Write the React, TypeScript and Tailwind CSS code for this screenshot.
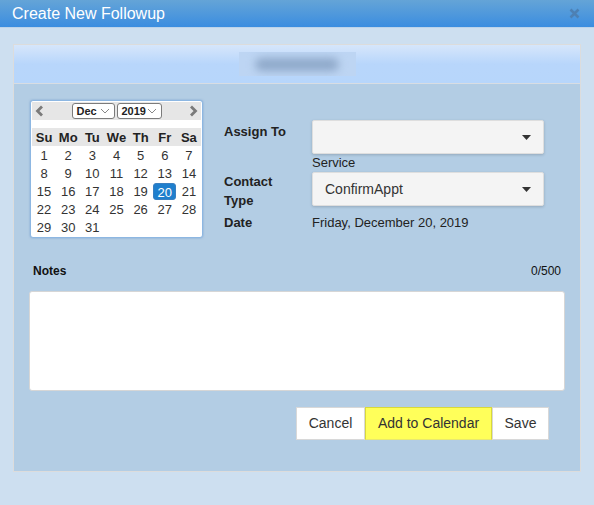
import React from 'react';

const weeks: (number | null)[][] = [
  [1, 2, 3, 4, 5, 6, 7],
  [8, 9, 10, 11, 12, 13, 14],
  [15, 16, 17, 18, 19, 20, 21],
  [22, 23, 24, 25, 26, 27, 28],
  [29, 30, 31, null, null, null, null],
];

const dayNames = ['Su', 'Mo', 'Tu', 'We', 'Th', 'Fr', 'Sa'];

function Chevron({ dir }: { dir: 'left' | 'right' }) {
  return (
    <svg width="9" height="12" viewBox="0 0 9 12">
      <path
        d={dir === 'left' ? 'M7 1.5 L2.5 6 L7 10.5' : 'M2 1.5 L6.5 6 L2 10.5'}
        fill="none"
        stroke="#7a7a7a"
        strokeWidth="2.8"
      />
    </svg>
  );
}

function MiniSelect({ label, width }: { label: string; width: string }) {
  return (
    <div
      className={`${width} h-[16px] flex items-center justify-between px-[4px] bg-white border border-[#7b7b7b] rounded-[3px] text-[11px] font-bold text-[#222]`}
    >
      <span>{label}</span>
      <svg width="10" height="6" viewBox="0 0 10 6">
        <path d="M1 1 L5 5 L9 1" fill="none" stroke="#888" strokeWidth="1" />
      </svg>
    </div>
  );
}

function Calendar() {
  return (
    <div className="w-[173px] h-[138px] bg-white border border-[#8db7e2] rounded-[3px] shadow-[0_0_2px_rgba(60,120,190,0.5)] p-[1px]">
      <div className="h-[18px] bg-[#e6e6e6] flex items-center justify-between px-[3px]">
        <Chevron dir="left" />
        <div className="flex gap-[2px]">
          <MiniSelect label="Dec" width="w-[43px]" />
          <MiniSelect label="2019" width="w-[45px]" />
        </div>
        <Chevron dir="right" />
      </div>
      <div className="mt-[8px] h-[18px] bg-[#e6e6e6] grid grid-cols-7 items-center text-[13px] font-bold text-[#222]">
        {dayNames.map((d) => (
          <div key={d} className="text-center">
            {d}
          </div>
        ))}
      </div>
      {weeks.map((w, i) => (
        <div key={i} className="h-[18px] grid grid-cols-7 items-center text-[13px] text-[#333]">
          {w.map((d, j) =>
            d === 20 ? (
              <div key={j} className="flex justify-center">
                <span className="w-[23px] h-[17px] leading-[17px] text-center rounded-[3px] bg-[#1f7fcd] border border-[#3a7fc0] text-white">
                  {d}
                </span>
              </div>
            ) : (
              <div key={j} className="text-center">
                {d ?? ''}
              </div>
            )
          )}
        </div>
      ))}
    </div>
  );
}

function Select({ value }: { value?: string }) {
  return (
    <div className="w-[232px] h-[34px] bg-[#f4f4f4] border border-[#dedede] rounded-[2px] shadow-[0_1px_3px_rgba(0,0,0,0.18)] flex items-center justify-between pl-[12px] pr-[12px] text-[14px] text-[#333]">
      <span>{value ?? ''}</span>
      <svg width="9" height="5" viewBox="0 0 9 5">
        <path d="M0 0 L9 0 L4.5 5 Z" fill="#333" />
      </svg>
    </div>
  );
}

export default function App() {
  return (
    <div className="w-[594px] h-[505px] bg-[#cddff0] font-['Liberation_Sans',Arial,sans-serif] overflow-hidden">
      <div className="h-[28px] bg-gradient-to-b from-[#64a4d7] to-[#3a8de0] border-b border-[#bcd3ea] flex items-center justify-between pl-[12px] pr-[14px]">
        <span className="text-white text-[16px]">Create New Followup</span>
        <svg width="11" height="11" viewBox="0 0 11 11">
          <path d="M1.5 1.5 L9.5 9.5 M9.5 1.5 L1.5 9.5" stroke="#4d80b3" strokeWidth="2.6" />
        </svg>
      </div>

      <div className="mx-[13px] mt-[16px] border border-[#dcdcdc] bg-[#b3cde4]">
        <div className="h-[39px] bg-gradient-to-b from-[#d6e6fb] via-[#b8d6fb] to-[#b7d6fb] border-b border-[#d8dde3] flex items-center justify-center">
          <div className="w-[117px] h-[24px] bg-[#bdd5f3] flex items-center justify-center overflow-hidden">
            <div className="w-[84px] h-[13px] rounded-full bg-[#8ea8c9] blur-[4px]" />
          </div>
        </div>

        <div className="px-[15px] pt-[16px] pb-[31px]">
          <div className="flex">
            <div className="ml-px">
              <Calendar />
            </div>
            <div className="ml-[21px] mt-[20px] flex flex-col text-[13px] text-[#222]">
              <div className="flex">
                <div className="w-[88px] pt-[2px] font-bold">Assign To</div>
                <Select />
              </div>
              <div className="ml-[88px] h-[18px] leading-[18px] text-[#222]">Service</div>
              <div className="flex">
                <div className="w-[88px] font-bold leading-[19px]">
                  Contact
                  <br />
                  Type
                </div>
                <Select value="ConfirmAppt" />
              </div>
              <div className="flex mt-[4px] leading-[17px]">
                <div className="w-[88px] font-bold">Date</div>
                <div>Friday, December 20, 2019</div>
              </div>
            </div>
          </div>

          <div className="mt-[25px] flex justify-between items-center h-[16px] px-[4px] text-[12px] text-[#111]">
            <span className="font-bold">Notes</span>
            <span>0/500</span>
          </div>
          <div className="mt-[12px] h-[100px] bg-white border border-[#d6d6d6] rounded-[3px]" />

          <div className="mt-[16px] flex justify-end pr-[16px] text-[14px] text-[#333]">
            <button className="w-[69px] h-[33px] bg-white border border-[#d8d8d8]">Cancel</button>
            <button className="w-[127px] h-[33px] bg-[#ffff5a] border border-[#d9d93a] border-b-[#e8e870]">
              Add to Calendar
            </button>
            <button className="w-[57px] h-[33px] bg-white border border-[#d8d8d8]">Save</button>
          </div>
        </div>
      </div>
    </div>
  );
}
